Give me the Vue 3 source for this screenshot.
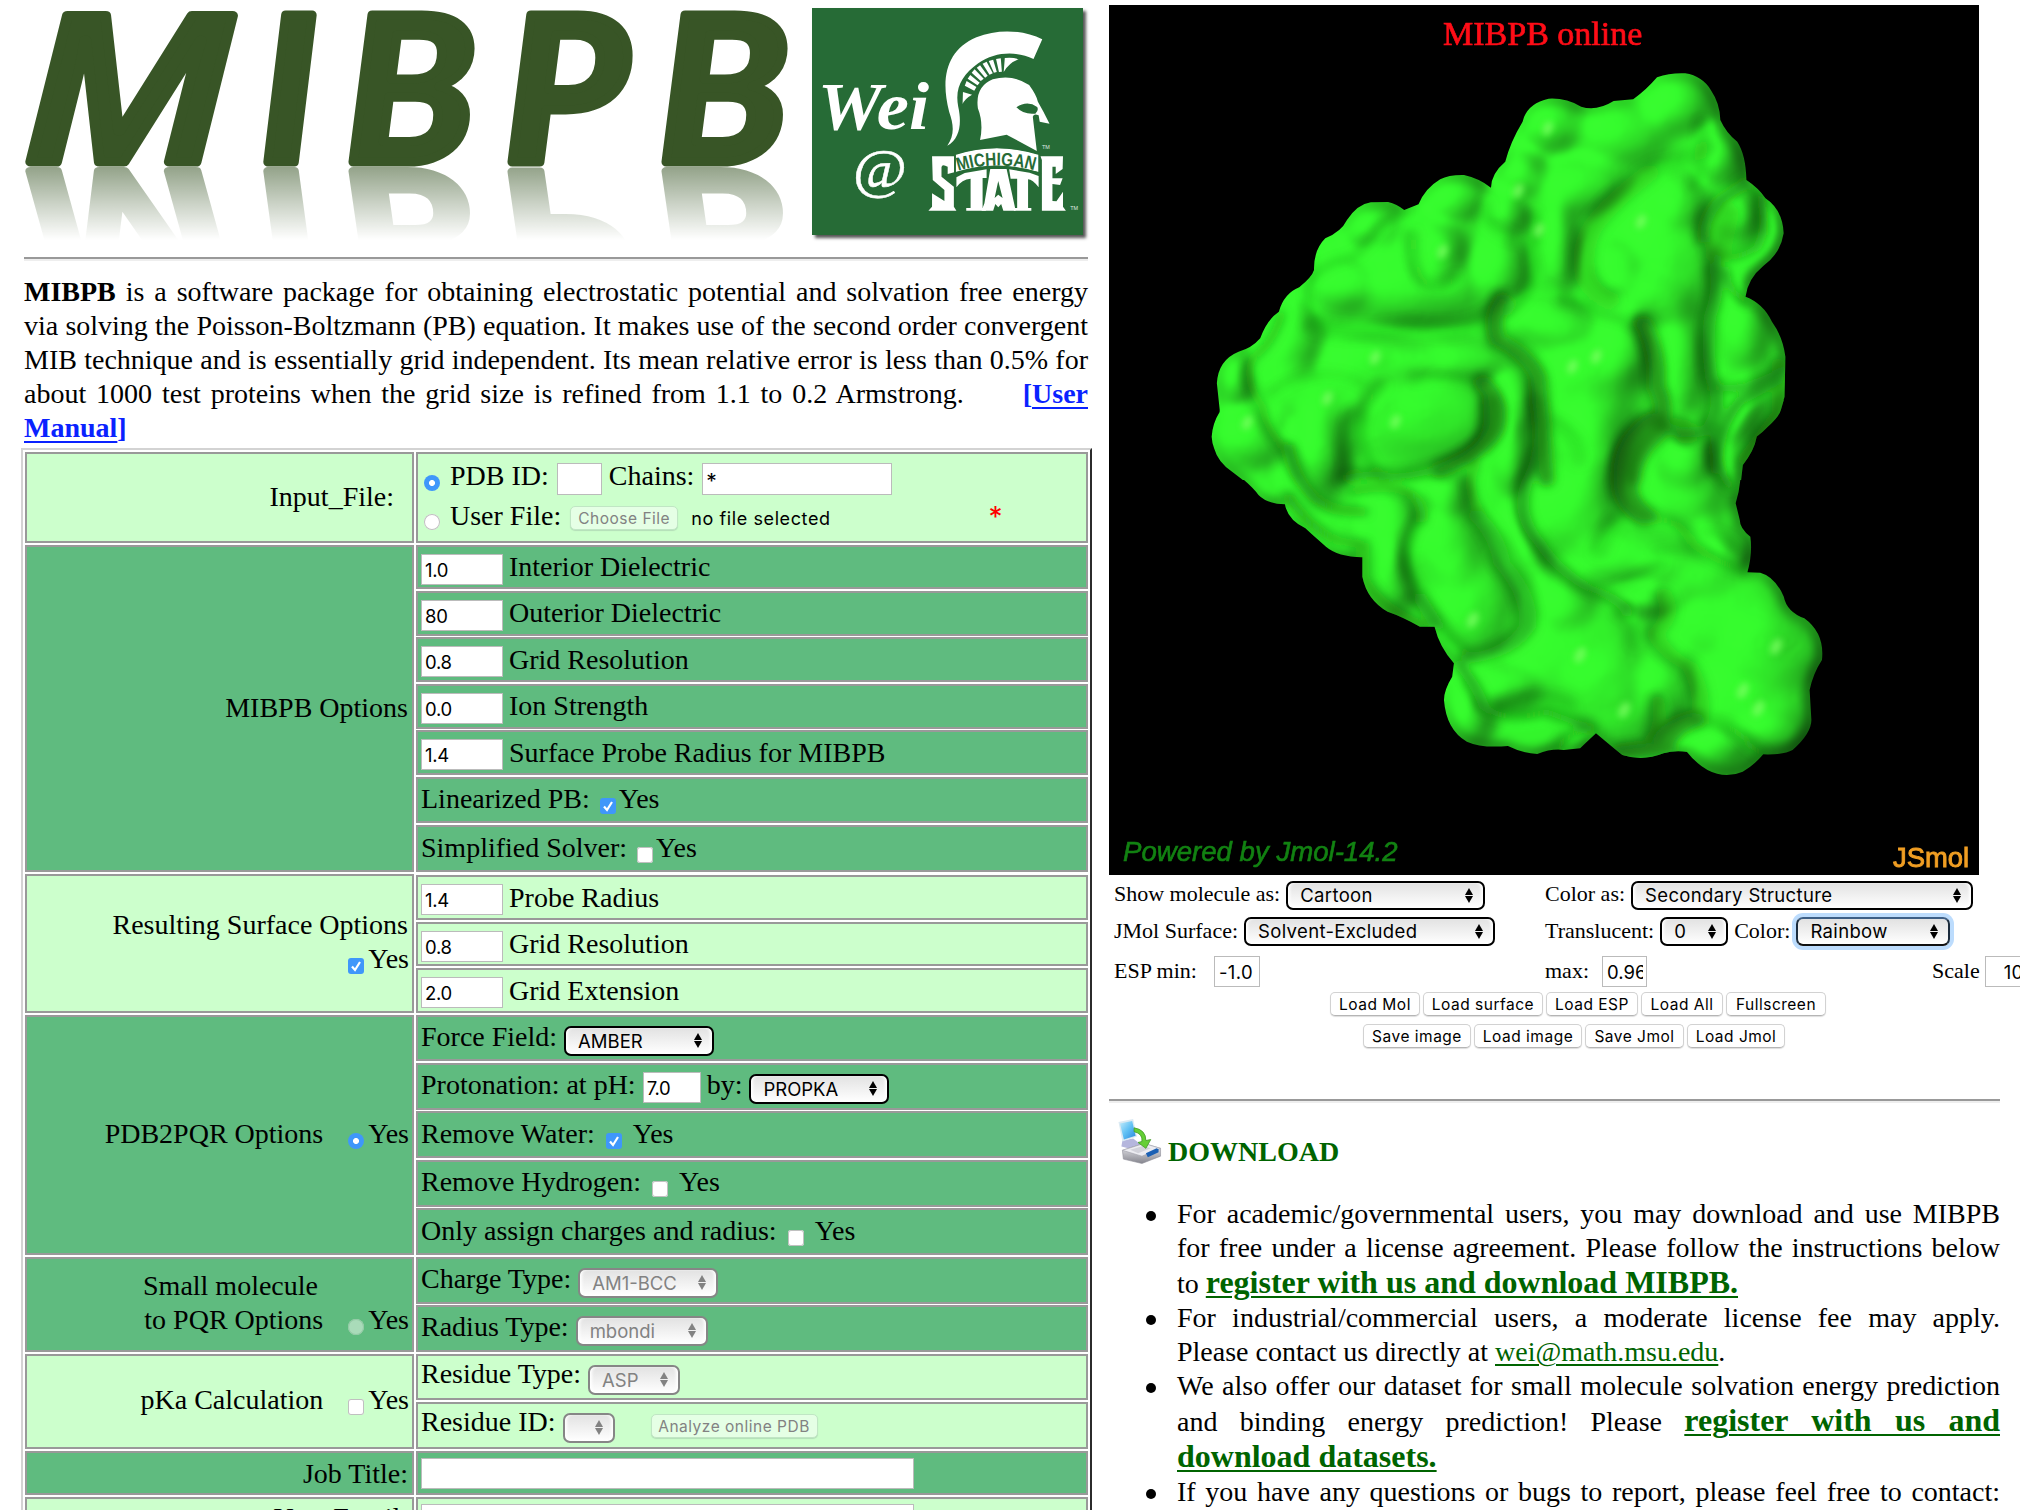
<script setup>
const T = (v) => ({ t: 'text', v })
const I = (v, w, extra = '') => ({ t: 'input', v, w, extra })
const C = (on) => ({ t: 'check', on })
const S = (v, w, off = false) => ({ t: 'select', v, w, off })

const field = (v, label) => [I(v, 82), T(label)]

const groups = [
  {
    tone: 'dark', lines: ['MIBPB Options'], h: 327, gap: 2,
    rows: [
      { h: 44, g: 2, c: field('1.0', 'Interior Dielectric') },
      { h: 45, g: 1, c: field('80', 'Outerior Dielectric') },
      { h: 45, g: 2, c: field('0.8', 'Grid Resolution'), low: true },
      { h: 45, g: 1, c: field('0.0', 'Ion Strength') },
      { h: 45, g: 2, c: field('1.4', 'Surface Probe Radius for MIBPB'), low: true },
      { h: 46, g: 2, c: [T('Linearized PB:'), C(true), T('Yes')], tight: true },
      { h: 47, g: 0, c: [T('Simplified Solver:'), C(false), T('Yes')], tight: true, low: true },
    ],
  },
  {
    tone: 'light', lines: ['Resulting Surface Options'], mark: 'check', on: true, below: true, h: 139, gap: 2,
    rows: [
      { h: 45, g: 2, c: field('1.4', 'Probe Radius'), low: true },
      { h: 44, g: 2, c: field('0.8', 'Grid Resolution') },
      { h: 45, g: 0, c: field('2.0', 'Grid Extension'), low: true },
    ],
  },
  {
    tone: 'dark', lines: ['PDB2PQR Options'], mark: 'radio', on: true, h: 240, gap: 2,
    rows: [
      { h: 46, g: 2, c: [T('Force Field:'), S('AMBER', 150)] },
      { h: 47, g: 1, c: [T('Protonation: at pH:'), I('7.0', 58), T('by:'), S('PROPKA', 140)] },
      { h: 47, g: 2, c: [T('Remove Water:'), C(true), T('Yes')], low: true },
      { h: 47, g: 1, c: [T('Remove Hydrogen:'), C(false), T('Yes')] },
      { h: 47, g: 0, c: [T('Only assign charges and radius:'), C(false), T('Yes')], low: true },
    ],
  },
  {
    tone: 'dark', lines: ['Small molecule', 'to PQR Options'], mark: 'radio', off: true, h: 95, gap: 2,
    rows: [
      { h: 47, g: 1, c: [T('Charge Type:'), S('AM1-BCC', 140, true)] },
      { h: 47, g: 0, c: [T('Radius Type:'), S('mbondi', 132, true)] },
    ],
  },
  {
    tone: 'light', lines: ['pKa Calculation'], mark: 'check', h: 95, gap: 2,
    rows: [
      { h: 46, g: 2, c: [T('Residue Type:'), S('ASP', 92, true)], high: true },
      { h: 47, g: 0, c: [T('Residue ID:'), S('', 52, true), { t: 'button', v: 'Analyze online PDB' }], high: true },
    ],
  },
  {
    tone: 'dark', lines: ['Job Title:'], h: 44, gap: 2, single: true,
    rows: [{ h: 44, g: 0, c: [I('', 493, 'wide')] }],
  },
  {
    tone: 'light', lines: ['User Email:'], h: 44, gap: 0,
    rows: [{ h: 44, g: 0, c: [I('', 493, 'wide')] }],
  },
]

const topButtons = [['Load Mol', 90], ['Load surface', 120], ['Load ESP', 92], ['Load All', 82], ['Fullscreen', 100]]
const lowButtons = [['Save image', 108], ['Load image', 108], ['Save Jmol', 99], ['Load Jmol', 98]]

const upper = 'M145 1440L110 1405Q75 1360 73 1310Q75 1270 92 1235L85 1150Q88 1080 135 1055Q165 1045 185 1015Q200 960 228 935Q240 880 275 862Q305 830 309 810Q308 750 335 715Q372 695 385 660Q410 612 440 607L480 606Q500 612 517 630L550 613Q565 565 600 538Q620 524 655 525Q690 535 717 563Q718 520 750 485Q762 425 790 365Q800 310 850 296Q890 293 925 320Q960 335 1000 303L1045 298Q1075 270 1100 232Q1130 218 1165 220Q1205 228 1225 272Q1245 310 1246 360Q1260 400 1285 425Q1305 465 1306 540Q1335 565 1350 595Q1390 630 1392 700Q1385 760 1345 798Q1310 835 1304 890Q1345 910 1365 965Q1390 1010 1396 1070L1394 1190Q1380 1260 1330 1310Q1325 1350 1298 1395L1294 1440Z'
const lower = 'M205 0L203 60Q190 90 192 120Q195 190 235 225Q260 260 270 285Q285 312 315 313Q320 360 350 385Q365 410 385 440Q405 470 447 472L447 530Q455 600 490 635Q515 650 545 680L570 680Q578 740 603 790L600 830Q586 870 586 900Q590 990 625 1025Q650 1045 695 1038Q720 1060 745 1062Q770 1045 790 1050L818 1045L845 1000Q875 1045 890 1065Q925 1085 960 1060Q980 1050 1000 1056Q1015 1090 1035 1110Q1065 1138 1095 1115Q1115 1095 1130 1063Q1165 1065 1180 1050Q1212 1000 1212 960L1209 870Q1215 820 1230 780Q1235 700 1200 655Q1170 635 1165 590Q1150 530 1125 518L1103 517Q1112 460 1108 410Q1090 385 1090 360L1083 310Q1092 260 1092 200Q1112 150 1120 105Q1155 60 1160 30L1165 0Z'

const toUpper = 'translate(1180 0) scale(.43367 .33333)'
const toLower = 'translate(1100 400) scale(.58696 .33333)'

// domes: [cx, cy, rx, ry, rotation]
const domesU = [
  [1150, 310, 62, 75, 0], [860, 370, 60, 70, 15], [1020, 400, 90, 80, 0], [920, 560, 95, 70, -20], [790, 520, 45, 60, 0],
  [640, 590, 60, 60, 0], [440, 670, 50, 60, 30], [605, 745, 45, 58, 0], [540, 780, 130, 150, 20], [370, 850, 60, 75, 0],
  [560, 880, 150, 85, 0], [750, 640, 45, 60, 0], [740, 800, 50, 90, 0], [1130, 780, 95, 150, 0], [1000, 800, 50, 70, 0],
  [850, 960, 80, 65, 0], [960, 1060, 120, 110, 0], [1030, 1040, 50, 90, 0], [940, 1190, 95, 110, 0], [1150, 1090, 50, 150, 0],
  [1150, 600, 60, 70, 0], [1300, 990, 50, 100, 0], [250, 1050, 60, 110, 15], [130, 1130, 40, 70, 0], [170, 1310, 70, 75, 0],
  [330, 1190, 120, 75, 0], [450, 1080, 100, 70, 0], [640, 1080, 110, 60, 0], [330, 1330, 60, 100, 0], [565, 1240, 145, 115, 0],
  [770, 1210, 45, 80, 0], [870, 740, 40, 120, 0], [1060, 900, 100, 70, 0], [1160, 1370, 55, 70, 0], [960, 1320, 80, 100, 0],
  [1240, 470, 45, 70, 0], [1280, 640, 50, 65, 0], [1290, 1230, 40, 90, 20], [760, 1370, 40, 90, 0],
]
const domesL = [
  [500, 400, 40, 110, 0], [590, 440, 50, 100, 0], [635, 610, 60, 130, 0], [810, 330, 65, 110, 0], [590, 280, 35, 60, 0],
  [1010, 230, 50, 140, 0], [900, 470, 80, 70, -25], [1000, 510, 70, 70, 0], [930, 600, 55, 40, 0], [1080, 650, 90, 130, 0],
  [820, 740, 95, 150, 0], [885, 890, 75, 120, 0], [1150, 740, 70, 100, 0], [1110, 900, 90, 130, 0], [690, 860, 50, 60, 0],
  [630, 940, 35, 80, 0], [970, 840, 40, 90, 0], [1050, 1040, 45, 60, 0], [495, 540, 35, 90, 0], [790, 590, 45, 80, 0],
  [365, 180, 45, 110, 0], [840, 180, 45, 110, 0], [1060, 440, 30, 70, -20], [730, 450, 28, 110, -10], [1150, 1000, 50, 60, 0],
]
// folds: [path, width, opacity]
const foldsU = [
  ['M745 900Q715 960 735 1020Q800 1060 825 1130Q835 1250 845 1440', 34, 0.85],
  ['M1070 970Q1105 1060 1098 1160Q1125 1230 1105 1300Q1050 1360 1045 1440', 34, 0.85],
  ['M1235 800Q1245 870 1222 950Q1215 1040 1225 1130Q1255 1220 1215 1290Q1160 1310 1120 1280', 28, 0.8],
  ['M1212 720Q1205 660 1245 600L1306 548', 22, 0.85], ['M1080 520Q1010 590 970 650Q920 720 935 830Q950 880 990 900', 50, 0.3],
  ['M1215 440Q1180 480 1100 500', 40, 0.25], ['M1206 370Q1200 500 1190 560', 26, 0.25],
  ['M880 902Q930 905 960 940Q1020 950 1065 985', 10, 0.6], ['M700 1150Q745 1210 728 1290Q700 1360 600 1410', 36, 0.85],
  ['M470 1155Q415 1210 418 1310Q430 1380 470 1440', 14, 0.5], ['M310 975Q400 1010 540 980Q650 1010 730 940', 50, 0.22],
  ['M295 850Q290 940 330 980', 10, 0.6], ['M296 850Q320 790 400 770Q440 730 470 670L520 632', 10, 0.5],
  ['M235 940Q215 1030 170 1070Q145 1140 190 1220Q200 1290 245 1350L275 1440', 10, 0.85],
  ['M205 1190Q240 1140 320 1120Q400 1120 440 1170', 16, 0.2], ['M540 700Q530 800 570 850Q610 870 640 830', 16, 0.4],
  ['M818 640Q825 700 808 750Q825 830 800 880L755 940', 12, 0.75], ['M705 610Q690 680 780 720', 28, 0.2],
  ['M1235 1160Q1300 1180 1394 1110', 24, 0.6], ['M1238 1410Q1240 1280 1290 1205Q1330 1180 1380 1140', 22, 0.8],
  ['M1340 600Q1355 680 1332 740Q1290 780 1240 770', 20, 0.6], ['M1260 810Q1260 870 1310 905', 16, 0.7], ['M1300 540L1340 600L1350 700', 12, 0.6],
  ['M830 860Q900 890 950 920', 20, 0.25], ['M860 1270Q920 1310 920 1380', 40, 0.15], ['M400 1240Q370 1340 400 1430', 30, 0.2],
  ['M540 1140Q610 1115 690 1150', 10, 0.6], ['M1380 1090V1240L1300 1380', 30, 0.5], ['M1260 640L1240 760', 60, 0.3],
]
const foldsL = [
  ['M420 235Q460 215 500 230Q560 225 620 180Q665 130 665 60V0', 22, 0.8], ['M430 275Q490 250 530 280Q555 320 548 360', 12, 0.85],
  ['M548 350Q515 430 527 520Q560 620 580 670Q600 730 640 775', 9, 0.8], ['M320 140Q330 240 370 300Q400 340 450 335', 15, 0.9],
  ['M320 290Q350 370 400 420L447 435', 13, 0.85], ['M640 345Q675 400 685 490Q735 590 728 680Q700 760 630 775', 30, 0.55],
  ['M745 0Q760 120 735 220Q700 330 750 430Q780 510 830 560Q890 600 900 640', 20, 0.7], ['M640 190Q620 260 650 345', 18, 0.4],
  ['M945 60Q895 120 895 220Q890 310 930 350', 40, 0.85], ['M930 353Q985 350 1010 430Q1050 490 1103 515', 10, 0.85], ['M885 350Q860 400 850 460', 30, 0.2],
  ['M1048 80Q1045 200 1075 260', 14, 0.8], ['M1030 395Q1060 390 1090 450', 9, 0.4], ['M945 455Q1000 430 1040 470', 12, 0.25],
  ['M870 570Q920 530 960 490', 16, 0.25], ['M960 580Q980 650 945 700Q960 760 1005 800Q1030 880 1020 960', 30, 0.35],
  ['M610 790Q640 850 655 920Q690 970 760 935Q800 960 840 990', 18, 0.75], ['M1010 960Q960 990 960 1045L890 1060', 42, 0.85],
  ['M1010 965Q1070 950 1110 1040L1130 1063', 13, 0.7], ['M950 900Q960 960 940 1020', 22, 0.4],
  ['M690 920Q760 870 800 920', 30, 0.25], ['M780 1045Q800 990 840 990', 12, 0.8], ['M880 640Q920 660 910 740', 14, 0.2],
  ['M447 440V530Q460 600 540 670', 24, 0.4], ['M540 590L570 680', 16, 0.7], ['M1000 110Q1000 60 960 80', 36, 0.5],
]
const shineU = [[848, 385], [605, 755], [1063, 665], [450, 1073], [340, 1195], [497, 1265], [155, 1268], [905, 1100], [960, 1070], [828, 690], [780, 572]]
const shineL = [[635, 660], [818, 765], [893, 930], [1152, 740], [1095, 872], [1122, 925]]
</script>

<template>
  <div class="page">
    <main class="left">
      <header class="banner">
        <svg class="wordmark" viewBox="24 0 776 244">
          <defs>
            <linearGradient id="fade" x1="0" y1="166" x2="0" y2="240" gradientUnits="userSpaceOnUse">
              <stop offset="0" stop-color="#fff" stop-opacity=".55" />
              <stop offset=".55" stop-color="#fff" stop-opacity=".24" />
              <stop offset="1" stop-color="#fff" stop-opacity="0" />
            </linearGradient>
            <mask id="fadeMask" maskUnits="userSpaceOnUse" x="0" y="166" width="820" height="76">
              <rect x="0" y="166" width="820" height="76" fill="url(#fade)" />
            </mask>
            <g id="word" class="word">
              <text class="wide-m" transform="translate(22.500 161.500) scale(1.2 1.010)">M</text>
              <text transform="translate(260 161.500)">I</text>
              <text transform="translate(345 161.500) scale(1.05 1)">B</text>
              <text transform="translate(504 161.500) scale(1.05 1)">P</text>
              <text transform="translate(658 161.500) scale(1.05 1)">B</text>
            </g>
          </defs>
          <use href="#word" />
          <g mask="url(#fadeMask)"><use href="#word" transform="translate(0 316) scale(1 -.9)" /></g>
        </svg>
        <svg class="spartan" viewBox="748 24 745 681" preserveAspectRatio="none">
          <rect x="748" y="24" width="745" height="681" fill="#266b36" />
          <g fill="#fff" fill-rule="evenodd">
            <path d="M1120 437C1140 405 1138 375 1125 335C1100 230 1120 150 1200 112C1260 85 1330 90 1381 118L1357 177C1310 152 1250 155 1205 190C1160 225 1140 265 1150 320C1160 370 1155 415 1120 437Z" />
            <path d="M1275 216L1278 174Q1300 171 1316 178Q1290 188 1275 216ZM1262 216L1254 177L1267 175L1270 215ZM1248 218L1234 183L1246 179L1256 216ZM1236 224L1217 191L1228 185L1245 220ZM1224 233L1201 203L1210 196L1231 227ZM1212 243L1187 218L1195 208L1220 236ZM1203 256L1176 236L1183 225L1209 248ZM1194 272L1168 257L1173 243L1200 261ZM1162 312L1163 276L1188 284Q1168 296 1162 312Z" />
            <path d="M1210 420Q1220 370 1204 325Q1196 260 1245 238Q1300 222 1345 255Q1365 285 1369 305Q1385 335 1401 371L1374 365L1371 346Q1358 340 1355 350L1366 453L1283 404ZM1310 322Q1340 300 1367 321Q1372 331 1362 341Q1330 345 1310 322Z" />
            <path d="M1078 469H1139V517L1121 522V500Q1105 490 1104 502V530L1138 560V620L1145 632H1068L1078 620V580L1112 603V570L1080 540Z" />
            <path d="M1145 532L1168 519L1228 508V534H1217V624H1226V632H1172V624H1184V536Q1160 538 1145 562Z" />
            <path d="M1238 507H1283L1308 632H1274L1268 612L1260 622L1252 612L1246 632H1214L1222 610ZM1260 543L1250 594L1260 584L1272 594Z" />
            <path d="M1290 508L1346 518L1371 528V562Q1354 538 1342 538V624H1351V632H1303V624H1312V536H1294Z" />
            <path d="M1376 469H1438L1437 507L1418 522V500H1409V535H1437L1430 555L1409 552V603L1420 604L1438 575V620L1446 632H1380V480Z" />
            <path d="M1143 463Q1255 425 1371 463V516Q1255 482 1143 516Z" />
          </g>
          <path d="M1141 463Q1255 422 1373 463V520Q1255 478 1141 520Z" fill="none" stroke="#266b36" stroke-width="5" />
          <path id="arc" d="M1150 513Q1257 480 1366 513" fill="none" />
          <text class="arched"><textPath href="#arc" textLength="212" lengthAdjust="spacingAndGlyphs">MICHIGAN</textPath></text>
          <text class="script" x="764" y="388" textLength="306" lengthAdjust="spacingAndGlyphs">Wei</text>
          <text class="script at" x="860" y="562" textLength="148" lengthAdjust="spacingAndGlyphs">@</text>
          <text class="tm" x="1380" y="446">TM</text>
          <text class="tm" x="1458" y="631">TM</text>
        </svg>
      </header>
      <hr />
      <div class="intro">
        <div class="just"><b>MIBPB</b> is a software package for obtaining electrostatic potential and solvation free energy</div>
        <div class="just">via solving the Poisson-Boltzmann (PB) equation. It makes use of the second order convergent</div>
        <div class="just">MIB technique and is essentially grid independent. Its mean relative error is less than 0.5% for</div>
        <div class="just">about 1000 test proteins when the grid size is refined from 1.1 to 0.2 Armstrong. <b class="blue manual">[<u>User</u></b></div>
        <div><b class="blue"><u>Manual</u>]</b></div>
      </div>

      <div class="table">
        <section class="group" style="height: 91px; margin-bottom: 2px">
          <div class="cell label light"><div class="lab input-file">Input_File:</div></div>
          <div class="cell light files">
            <div class="row first">
              <i class="radio on"></i><span class="txt pdb">PDB ID:</span><input class="box" style="width: 45px" value="" />
              <span class="txt">Chains:</span><input class="box star-in" style="width: 190px" value="*" />
            </div>
            <div class="row second-line">
              <i class="radio"></i><span class="txt pdb">User File:</span><button class="btn choose" disabled>Choose File</button>
              <span class="nofile">no file selected</span><span class="req">*</span>
            </div>
          </div>
        </section>
        <section v-for="(g, gi) in groups" :key="gi" class="group" :style="{ height: g.h + 'px', marginBottom: g.gap + 'px' }">
          <div class="cell label" :class="g.tone">
            <div class="lab" :class="{ single: g.single, marked: g.mark }">
              <div v-for="(l, li) in g.lines" :key="l" class="lab-line" :class="{ inset: g.mark && !g.below && li < g.lines.length - 1, head: g.below }">
                <span>{{ l }}</span>
                <template v-if="g.mark && !g.below && li === g.lines.length - 1">
                  <i class="lead" :class="[g.mark, { on: g.on, off: g.off }]"></i><span>Yes</span>
                </template>
              </div>
              <div v-if="g.below" class="lab-line"><i :class="[g.mark, { on: g.on }]"></i><span>Yes</span></div>
            </div>
          </div>
          <div class="stack" :class="{ shifted: g.below }">
            <div v-for="(r, ri) in g.rows" :key="ri" class="cell row" :class="[g.tone, { tight: r.tight, low: r.low, high: r.high }]" :style="{ height: r.h + 'px', marginBottom: r.g + 'px' }">
              <template v-for="(c, ci) in r.c" :key="ci">
                <span v-if="c.t === 'text'" class="txt">{{ c.v }}</span>
                <input v-else-if="c.t === 'input'" class="box" :class="c.extra" :value="c.v" :style="{ width: c.w + 'px' }" />
                <i v-else-if="c.t === 'check'" class="check" :class="{ on: c.on }"></i>
                <span v-else-if="c.t === 'select'" class="sel" :class="{ off: c.off }" :style="{ width: c.w + 'px' }">{{ c.v }}<i class="arrows"></i></span>
                <button v-else class="btn analyze" disabled>{{ c.v }}</button>
              </template>
            </div>
          </div>
        </section>
      </div>
    </main>

    <aside class="right">
      <svg class="viewer" viewBox="1109 5 870 870">
        <defs>
          <clipPath id="body">
            <path :d="upper" :transform="toUpper" />
            <path :d="lower" :transform="toLower" />
          </clipPath>
          <radialGradient id="dome">
            <stop offset="0" stop-color="#fff" stop-opacity=".42" />
            <stop offset=".5" stop-color="#fff" stop-opacity=".3" />
            <stop offset=".8" stop-color="#fff" stop-opacity=".11" />
            <stop offset="1" stop-color="#fff" stop-opacity="0" />
          </radialGradient>
          <!-- turns the grey height map into a lit green surface -->
          <filter id="relief" x="1109" y="5" width="870" height="870" filterUnits="userSpaceOnUse" color-interpolation-filters="sRGB">
            <feGaussianBlur stdDeviation="6" />
            <feColorMatrix type="matrix" values="0 0 0 0 0  0 0 0 0 0  0 0 0 0 0  1 0 0 0 0" />
            <feDiffuseLighting surfaceScale="44" diffuseConstant="1.08" lighting-color="#36ff2e">
              <feDistantLight azimuth="210" elevation="63" />
            </feDiffuseLighting>
            <feComponentTransfer>
              <feFuncR type="linear" slope=".68" intercept=".065" />
              <feFuncG type="linear" slope=".68" intercept=".31" />
              <feFuncB type="linear" slope=".68" intercept=".055" />
            </feComponentTransfer>
            <feGaussianBlur stdDeviation="2" />
          </filter>
          <filter id="mid" x="1109" y="5" width="870" height="870" filterUnits="userSpaceOnUse"><feGaussianBlur stdDeviation="5" /></filter>
          <filter id="tiny" x="1109" y="5" width="870" height="870" filterUnits="userSpaceOnUse"><feGaussianBlur stdDeviation="3" /></filter>
        </defs>
        <rect x="1109" y="5" width="870" height="870" />
        <g clip-path="url(#body)">
          <g filter="url(#relief)">
            <rect x="1109" y="5" width="870" height="870" fill="#4c4c4c" />
            <path :d="upper" :transform="toUpper" fill="#777" />
            <path :d="lower" :transform="toLower" fill="#777" />
            <g fill="url(#dome)">
              <ellipse v-for="(e, i) in domesU" :key="i" :rx="e[2] * 1.4" :ry="e[3] * 1.4" :transform="`${toUpper} translate(${e[0]} ${e[1]}) rotate(${e[4]})`" />
              <ellipse v-for="(e, i) in domesL" :key="i" :rx="e[2] * 1.4" :ry="e[3] * 1.4" :transform="`${toLower} translate(${e[0]} ${e[1]}) rotate(${e[4]})`" />
            </g>
            <g fill="none" stroke="#333" stroke-linecap="round">
              <path v-for="(p, i) in foldsU" :key="i" :d="p[0]" :stroke-width="p[1] * 0.8" :opacity="p[2] * 0.5" :transform="toUpper" />
              <path v-for="(p, i) in foldsL" :key="i" :d="p[0]" :stroke-width="p[1] * 0.8" :opacity="p[2] * 0.5" :transform="toLower" />
            </g>
          </g>
          <g filter="url(#mid)" fill="none" stroke="#176f10" stroke-linecap="round">
            <path v-for="(p, i) in foldsU" :key="i" :d="p[0]" :stroke-width="p[1]" :opacity="p[2] * 0.8" :transform="toUpper" />
            <path v-for="(p, i) in foldsL" :key="i" :d="p[0]" :stroke-width="p[1]" :opacity="p[2] * 0.8" :transform="toLower" />
          </g>
          <g filter="url(#tiny)" fill="#7dff63" opacity=".75">
            <ellipse v-for="(s, i) in shineU" :key="i" rx="11" ry="22" :transform="`${toUpper} translate(${s[0]} ${s[1]}) rotate(15)`" />
            <ellipse v-for="(s, i) in shineL" :key="i" rx="9" ry="24" :transform="`${toLower} translate(${s[0]} ${s[1]}) rotate(12)`" />
          </g>
        </g>
        <text class="v-title" x="1443" y="45">MIBPB online</text>
        <text class="v-pow" x="1123" y="861">Powered by Jmol-14.2</text>
        <text class="v-js" x="1893" y="867">JSmol</text>
      </svg>

      <div class="controls">
        <div class="crow r1">
          <div class="half"><span>Show molecule as:</span><span class="sel" style="width: 199px">Cartoon<i class="arrows"></i></span></div>
          <div class="half"><span>Color as:</span><span class="sel" style="width: 342px">Secondary Structure<i class="arrows"></i></span></div>
        </div>
        <div class="crow r2">
          <div class="half"><span>JMol Surface:</span><span class="sel" style="width: 251px">Solvent-Excluded<i class="arrows"></i></span></div>
          <div class="half"><span>Translucent:</span><span class="sel" style="width: 68px">0<i class="arrows"></i></span><span>Color:</span><span class="sel focus" style="width: 154px">Rainbow<i class="arrows"></i></span></div>
        </div>
        <div class="crow r3">
          <div class="half esp"><span>ESP min:</span><input class="box" style="width: 46px" value="-1.03" /></div>
          <div class="half max"><span>max:</span><input class="box" style="width: 45px" value="0.96" /></div>
          <div class="scale"><span>Scale</span><input class="box" style="width: 80px" value="10" /></div>
        </div>
        <div class="brow"><button v-for="b in topButtons" :key="b[0]" class="btn" :style="{ width: b[1] + 'px' }">{{ b[0] }}</button></div>
        <div class="brow second"><button v-for="b in lowButtons" :key="b[0]" class="btn" :style="{ width: b[1] + 'px' }">{{ b[0] }}</button></div>
      </div>
      <hr />
      <h2>
        <svg class="dl" viewBox="0 0 46 46">
          <defs>
            <linearGradient id="scr" x1="0" y1="0" x2="1" y2="1"><stop offset="0" stop-color="#c4ecfb" /><stop offset=".5" stop-color="#5fc0f4" /><stop offset="1" stop-color="#2a86dc" /></linearGradient>
            <linearGradient id="drv" x1="0" y1="0" x2="0" y2="1"><stop offset="0" stop-color="#f2f2f6" /><stop offset="1" stop-color="#85858e" /></linearGradient>
          </defs>
          <path d="M5 22l11-2 8 6-9 5-11-3z" fill="#b5b6dd" />
          <path d="M1 3l15-3 4 18-15 5z" fill="#dbeaf3" />
          <path d="M2.500 4.500l12.500-2.500 3.500 15-12 4z" fill="url(#scr)" />
          <path d="M5 32l22-7 17 5v8L25 45.500 6 41z" fill="url(#drv)" stroke="#8e8e98" stroke-width=".6" />
          <path d="M5 32l22-7 17 5-19 8z" fill="#ececf1" stroke="#a0a0aa" stroke-width=".6" />
          <path d="M13 31.500l13-4 8 2.500-13 5z" fill="#d2d2da" />
          <path d="M29 35l11-5 2 1v3l-11 5z" fill="#1b60b4" />
          <path d="M17 9q12 2 12 13l5-1-5 9-8-6 4-1q1-8-8-10z" fill="#65cf35" stroke="#3c9722" stroke-width=".8" />
        </svg>
        <span>DOWNLOAD</span>
      </h2>
      <ul>
        <li>
          <div class="just">For academic/governmental users, you may download and use MIBPB</div>
          <div class="just">for free under a license agreement. Please follow the instructions below</div>
          <div class="big">to <a class="reg">register with us and download MIBPB.</a></div>
        </li>
        <li>
          <div class="just">For industrial/commercial users, a moderate license fee may apply.</div>
          <div>Please contact us directly at <a class="mail">wei@math.msu.edu</a>.</div>
        </li>
        <li>
          <div class="just">We also offer our dataset for small molecule solvation energy prediction</div>
          <div class="just big">and binding energy prediction! Please <a class="reg">register with us and</a></div>
          <div class="big"><a class="reg">download datasets.</a></div>
        </li>
        <li><div class="just">If you have any questions or bugs to report, please feel free to contact:</div></li>
      </ul>
    </aside>
  </div>
</template>

<style>
body { margin: 0; overflow: hidden; }
</style>

<style scoped>
.page { width: 2020px; height: 1510px; overflow: hidden; display: flex; background: #fff; color: #000; font: 28px/34px "Liberation Serif", serif; }
.page * { box-sizing: border-box; }
i { font-style: normal; }
.left { width: 1109px; padding-left: 24px; flex: none; }
.right { width: 911px; flex: none; padding-top: 5px; }
hr { margin: 0; height: 4px; border: 0; border-top: 2px solid #999; border-bottom: 2px solid #eee; }
.left > hr { width: 1064px; }
.right > hr { width: 891px; margin-top: 51px; }
.banner { height: 257px; display: flex; align-items: flex-start; }
.wordmark { width: 776px; height: 244px; flex: none; }
.word { font: italic 700 203px Lato, sans-serif; fill: #385526; stroke: #385526; stroke-width: 9px; stroke-linejoin: round; }
.wide-m { font-family: "Open Sans", sans-serif; font-weight: 600; }
.spartan { width: 271px; height: 227px; margin: 8px 0 0 12px; box-shadow: 3px 3px 3px #555; }
.arched { font: bold 56px "Liberation Sans", sans-serif; fill: #266b36; }
.script { font: italic bold 206px "Liberation Serif", serif; fill: #fff; }
.script.at { font-size: 165px; font-weight: normal; stroke: #fff; stroke-width: 1.5px; }
.tm { font: 15px "Liberation Sans", sans-serif; fill: #dfeae1; }

.intro { width: 1064px; padding-top: 14px; height: 187px; white-space: nowrap; }
.just { text-align: justify; text-align-last: justify; white-space: nowrap; }
.blue { color: #0a22ff; }
.manual { margin-left: 49px; }
u, a { text-decoration: underline; text-decoration-thickness: 2px; text-underline-offset: 4px; }

.table { width: 1071px; margin-left: -3px; height: 1100px; border: 2px solid #d3d3d3; border-right-color: #2b2b2b; padding: 2px 1px 0 2px; }
.group { display: flex; gap: 2px; }
.cell { border: 2px solid #999; }
.light { background: #ccffcc; }
.dark { background: #5fbb7f; }
.label { width: 389px; flex: none; display: flex; align-items: center; justify-content: flex-end; padding-right: 4px; }
.lab { padding-bottom: 2px; }
.lab.marked { padding-bottom: 3px; margin-right: -1px; }
.lab.single { padding-bottom: 0; margin-bottom: -1px; }
.lab-line { display: flex; justify-content: flex-end; }
.lab-line.inset { padding-right: 91px; }
.lab-line.head { padding-right: 1px; }
.input-file { padding: 0 14px 2px 0; }
.stack { width: 672px; flex: none; }
.stack.shifted { padding-top: 1px; }
.row { display: flex; align-items: flex-start; padding: 3px 0 0 3px; white-space: nowrap; gap: 7px; }
.row.low { padding-top: 4px; }
.row.low .box { margin-top: 3px; }
.row.high .txt { margin-top: -2px; }
.files { width: 672px; flex: none; }
.files .row { padding-left: 6px; height: 35px; }
.files .row.first { margin-top: 1px; height: 40px; padding-top: 4px; }
.files .second-line .txt { margin-top: 1px; }
.pdb { margin-left: 3px; }
.box { height: 31px; margin: 4px -1px 0 0; padding: 1px 4px 0 3px; border: 1px solid #bbb; outline: 0; border-radius: 0; background: #fff; font: 18.500px Inter, sans-serif; color: #000; letter-spacing: -.3px; flex: none; }
.box.wide { margin-top: 2px; }
.first .box { margin: 4px 0 0 1px; height: 32px; }
.star-in { font-size: 21px; padding-top: 5px; }
.check, .radio { width: 16px; height: 16px; margin: 16px 4px 0 4px; flex: none; background: #fff; border-radius: 3px; box-shadow: inset 0 0 0 1px #c0c0c0; }
.lab .check, .lab .radio { margin: 16px 4px 0 0; }
.lab .lead.check, .lab .lead.radio { margin-left: 25px; }
.tight { gap: 4px; }
.tight .check { margin: 16px -1px 0 6px; }
.radio { border-radius: 50%; }
.files .radio { margin: 16px 0 0; }
.check.on { box-shadow: none; background: url("data:image/svg+xml,%3Csvg xmlns='http://www.w3.org/2000/svg' viewBox='0 0 16 16'%3E%3Cpath d='M4 8.500l3 3.500 5-8' fill='none' stroke='white' stroke-width='2.200'/%3E%3C/svg%3E") #3f97fa; }
.radio.on { box-shadow: none; background: radial-gradient(circle, #fff 2.600px, #3f97fa 3.400px); }
.radio.off { background: #a9dbb9; box-shadow: inset 0 0 0 1px #93c9a5; }
.sel { position: relative; height: 30px; margin-top: 6px; flex: none; border: 2px solid #000; border-radius: 7px; background: linear-gradient(#e2e2e2, #fff); box-shadow: inset 3px 0 3px -1px #fff, inset -3px 0 3px -1px #fff; font: 18.500px/26px Inter, sans-serif; padding-left: 12px; color: #000; }
.sel.off { border-color: #868686; color: #828282; }
.arrows { position: absolute; right: 10px; top: 4px; width: 8px; height: 17px; color: inherit; }
.arrows::before, .arrows::after { content: ""; position: absolute; left: 0; border: 4px solid transparent; }
.arrows::before { top: -3px; border-bottom: 7px solid currentColor; }
.arrows::after { bottom: -3px; border-top: 7px solid currentColor; }
.focus { box-shadow: 0 0 0 4px #bcdcfd; border-color: #3d5f86 #1c2c3d #111; }
.btn { height: 24px; flex: none; padding: 2px 0 0; border: 1px solid #d2d2d2; border-bottom-color: #b5b5b5; border-radius: 5px; background: #fff; font: 15.500px/20px Inter, sans-serif; letter-spacing: .5px; color: #000; box-shadow: 0 1px 1px #ddd; white-space: nowrap; }
.btn:disabled { background: #e5ffe5; border-color: #c0e6c4; color: #828282; box-shadow: 0 1px 1px #b4deb8; }
.choose { width: 108px; margin: 8px 0 0 2px; }
.analyze { width: 167px; margin: 7px 0 0 29px; }
.nofile { margin: 0 0 0 6px; padding-top: 4px; font: 18px/34px Inter, sans-serif; letter-spacing: .6px; }
.req { margin-left: 151px; padding-top: 1px; font: 28px/36px Inter, sans-serif; color: #f00; }

.viewer { display: block; width: 870px; height: 870px; }
.v-title { font: 34px "Liberation Serif", serif; fill: #ff0d17; stroke: #ff0d17; stroke-width: .7px; }
.v-pow { font: italic 27.600px "Liberation Sans", sans-serif; fill: #128212; stroke: #128212; stroke-width: .6px; }
.v-js { font: 27.400px "Liberation Sans", sans-serif; fill: #f09e23; stroke: #f09e23; stroke-width: .9px; }
.controls { height: 173px; font-size: 22px; line-height: 28px; }
.crow { display: flex; padding-left: 5px; white-space: nowrap; }
.half { width: 431px; flex: none; display: flex; gap: 6px; }
.crow .sel { margin: 0; height: 29px; line-height: 25px; letter-spacing: .35px; }
.r1 { padding-top: 6px; height: 42px; }
.r1 > .half > span:first-child { margin-top: -1px; }
.r2 { height: 38px; }
.r3 { height: 37px; }
.r3 .box { margin: 1px 0 0; letter-spacing: .4px; padding: 1px 6px 0 4px; }
.r3 .max .box { padding-right: 3px; letter-spacing: 0; }
.r3 span { padding-top: 2px; }
.half.esp { gap: 17px; }
.half.max { gap: 13px; width: 387px; }
.scale { display: flex; gap: 5px; }
.scale .box { padding-left: 18px; }
.brow { display: flex; gap: 3px; padding-left: 221px; height: 32px; }
.second { padding-left: 254px; }

h2 { margin: 0; font-size: 28px; line-height: 34px; color: #006400; display: flex; padding: 16px 0 0 8px; gap: 5px; height: 94px; }
h2 span { padding-top: 16px; }
.dl { width: 46px; height: 45px; flex: none; }
ul { margin: 0; padding: 0 0 0 68px; width: 891px; list-style: none; }
li { position: relative; white-space: nowrap; }
li::before { content: ""; position: absolute; left: -31px; top: 14px; width: 10px; height: 10px; border-radius: 50%; background: #000; }
.big { height: 36px; line-height: 36px; }
a { color: #006400; text-underline-offset: 3px; }
.reg { font-size: 32px; font-weight: bold; line-height: 34px; }
</style>
